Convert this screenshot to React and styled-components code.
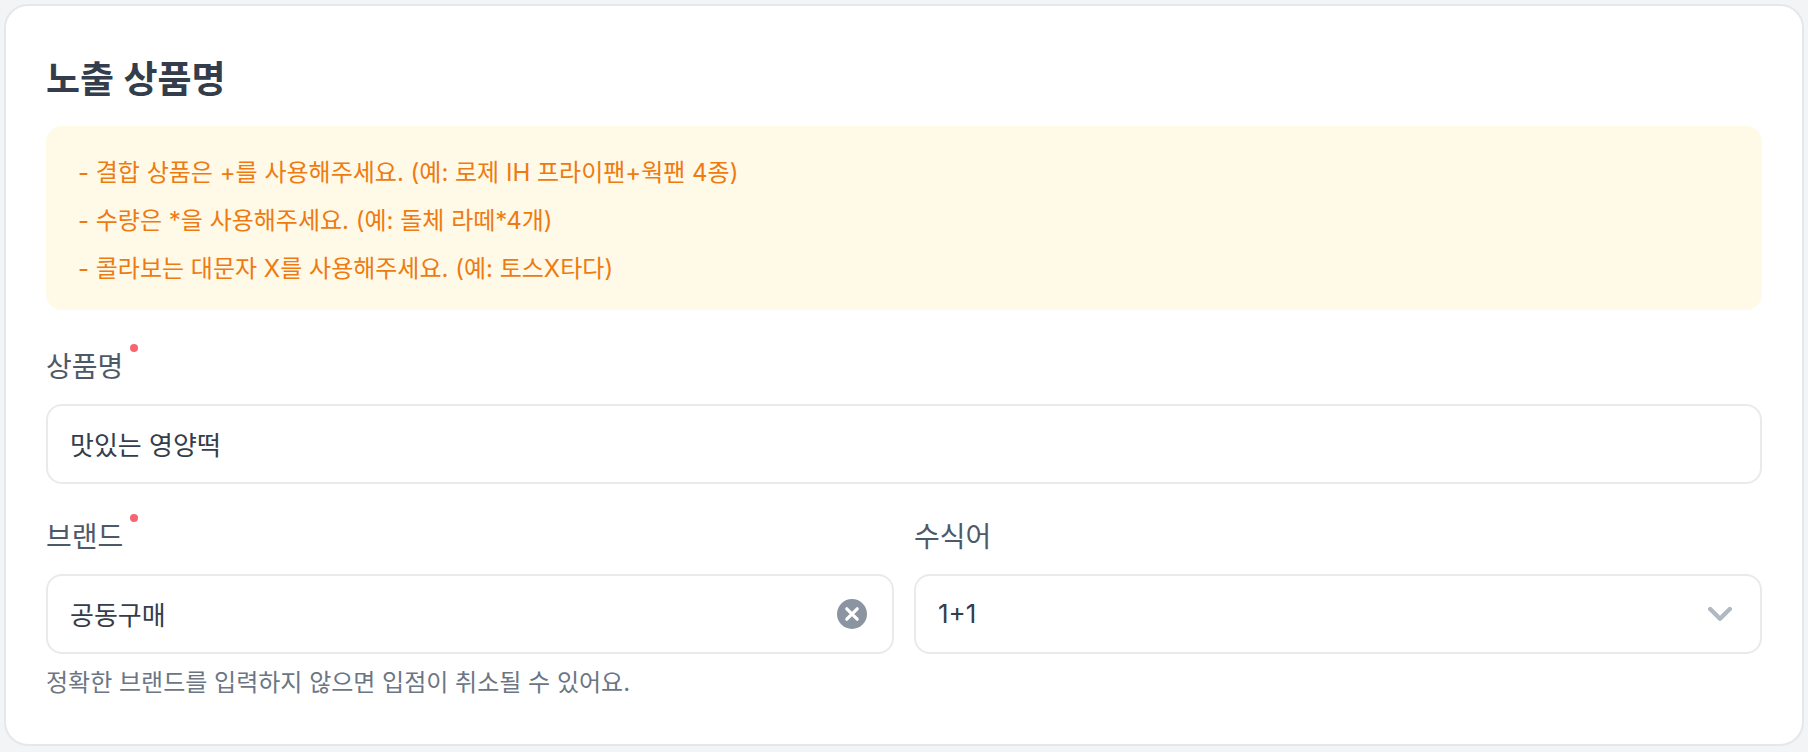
import { useState } from "react"
import styled, { createGlobalStyle } from "styled-components"

export default function App() {
    const [name, setName] = useState("맛있는 영양떡")
    const [brand, setBrand] = useState("공동구매")
    const [modifier, setModifier] = useState("1+1")

    return (
        <>
            <GlobalStyle />
            <Card>
                <Title>노출 상품명</Title>
                <Notice>
                    <li>- 결합 상품은 +를 사용해주세요. (예: 로제 IH 프라이팬+웍팬 4종)</li>
                    <li>- 수량은 *을 사용해주세요. (예: 돌체 라떼*4개)</li>
                    <li>- 콜라보는 대문자 X를 사용해주세요. (예: 토스X타다)</li>
                </Notice>
                <Fields>
                    <Field>
                        <Label htmlFor="name">상품명<Dot /></Label>
                        <Control>
                            <Input id="name" value={name} onChange={(e) => setName(e.target.value)} />
                        </Control>
                    </Field>
                    <Columns>
                        <Field>
                            <Label htmlFor="brand">브랜드<Dot /></Label>
                            <Control>
                                <Input id="brand" value={brand} onChange={(e) => setBrand(e.target.value)} />
                                <ClearButton type="button" aria-label="지우기" onClick={() => setBrand("")}>
                                    <svg width="30" height="30" viewBox="0 0 30 30" fill="none">
                                        <circle cx="15" cy="15" r="15" fill="#8b95a1" />
                                        <path d="M9.8 9.8L20.2 20.2M20.2 9.8L9.8 20.2" stroke="#fff" strokeWidth="3.2" strokeLinecap="round" />
                                    </svg>
                                </ClearButton>
                            </Control>
                            <Help>정확한 브랜드를 입력하지 않으면 입점이 취소될 수 있어요.</Help>
                        </Field>
                        <Field>
                            <Label htmlFor="modifier">수식어</Label>
                            <Control>
                                <Select id="modifier" value={modifier} onChange={(e) => setModifier(e.target.value)}>
                                    <option>1+1</option>
                                </Select>
                                <Arrow width="24" height="16" viewBox="0 0 24 16" fill="none">
                                    <path d="M2.2 3L12 12.8L21.8 3" stroke="#b0b8c1" strokeWidth="4.4" strokeLinecap="round" strokeLinejoin="round" />
                                </Arrow>
                            </Control>
                        </Field>
                    </Columns>
                </Fields>
            </Card>
        </>
    )
}

const GlobalStyle = createGlobalStyle`
    * {
        box-sizing: border-box;
    }
    body {
        margin: 0;
        padding: 4px;
        background-color: #f2f4f6;
        font-family: Inter, "Noto Sans CJK KR", sans-serif;
    }
    input, select, button {
        font-family: inherit;
    }
`

const Card = styled.section`
    padding: 40px;
    border: 2px solid #e5e8eb;
    border-radius: 24px;
    background-color: #fff;
`

const Title = styled.h2`
    margin: 0 0 12px;
    font-size: 37px;
    line-height: 68px;
    font-weight: 600;
    color: #333d4b;
`

const Notice = styled.ul`
    margin: 0 0 34px;
    padding: 23px 32px 17px;
    list-style: none;
    border-radius: 16px;
    background-color: #fff9e7;
    font-size: 24px;
    line-height: 48px;
    color: #ed7b12;
`

const Fields = styled.div`
    display: flex;
    flex-direction: column;
    gap: 30px;
`

const Columns = styled.div`
    display: grid;
    grid-template-columns: 1fr 1fr;
    gap: 20px;
`

const Field = styled.div`
    display: flex;
    flex-direction: column;
`

const Label = styled.label`
    display: flex;
    gap: 7px;
    margin-bottom: 14px;
    font-size: 28px;
    line-height: 46px;
    color: #4e5968;
`

const Dot = styled.span`
    width: 8px;
    height: 8px;
    border-radius: 50%;
    background-color: #f66570;
`

const Control = styled.div`
    position: relative;
    display: flex;
    align-items: center;
    height: 80px;
    border: 2px solid #e9eaec;
    border-radius: 16px;
    background-color: #fff;
`

const Input = styled.input`
    flex: 1;
    min-width: 0;
    height: 100%;
    padding: 0 22px 2px;
    border: 0;
    outline: 0;
    background: none;
    font-size: 26px;
    color: #333d4b;
`

const Select = styled.select`
    flex: 1;
    height: 100%;
    padding: 0 22px 2px;
    border: 0;
    outline: 0;
    appearance: none;
    background: none;
    font-size: 26px;
    color: #333d4b;
`

const ClearButton = styled.button`
    display: flex;
    margin-right: 25px;
    padding: 0;
    border: 0;
    background: none;
    cursor: pointer;
`

const Arrow = styled.svg`
    position: absolute;
    right: 28px;
    pointer-events: none;
`

const Help = styled.p`
    margin: 8px 0 0;
    font-size: 24px;
    line-height: 42px;
    color: #6b7684;
`
